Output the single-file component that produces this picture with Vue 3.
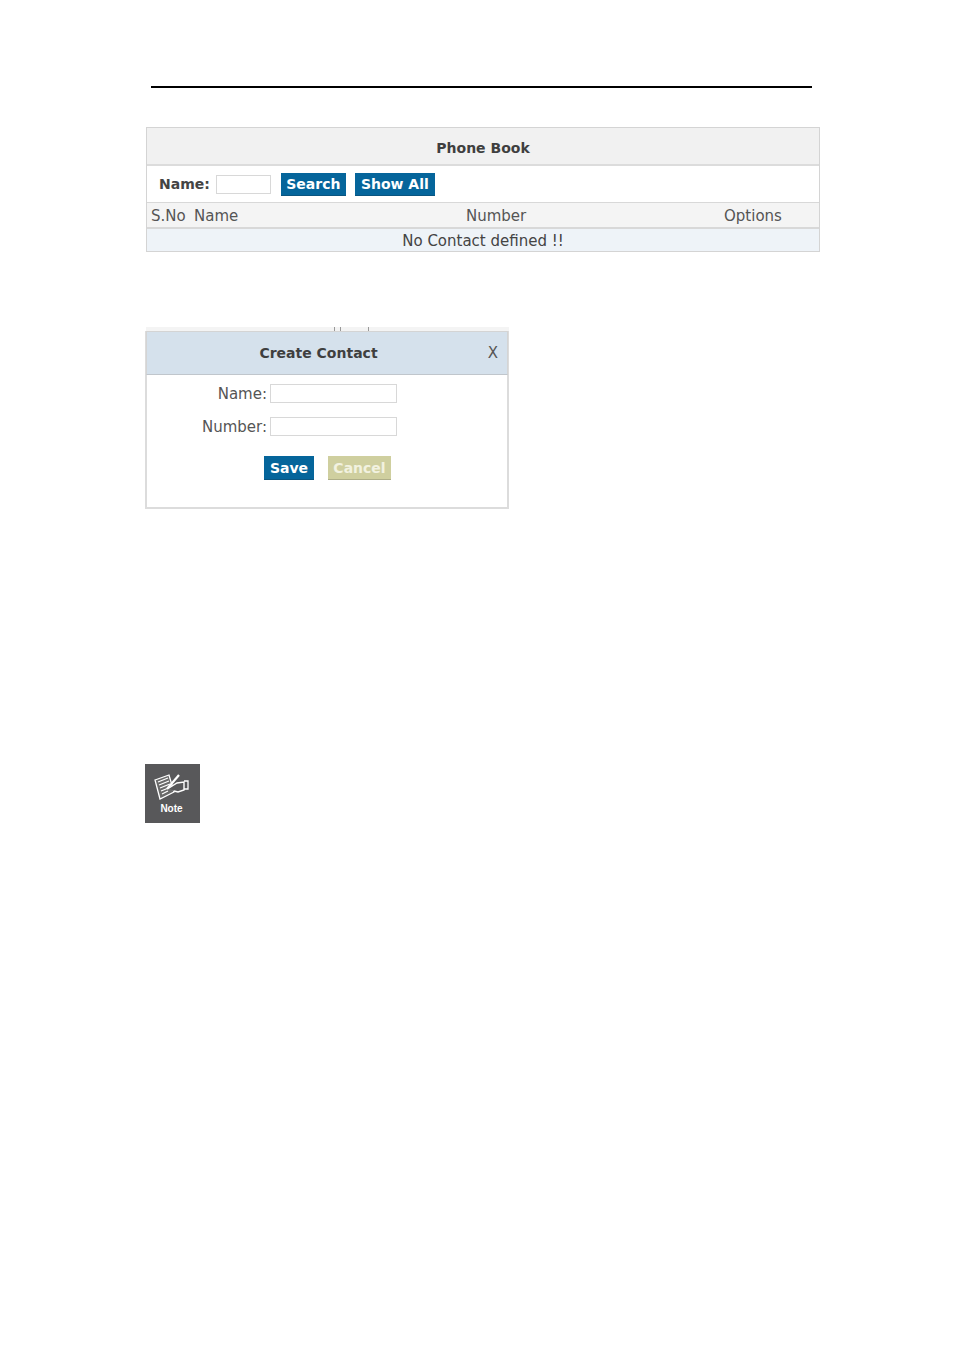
<script setup>
const columns = ['S.No', 'Name', 'Number', 'Options']
</script>

<template>
  <div class="page">
    <div class="rule"></div>

    <section class="book">
      <h2 class="book-title">Phone Book</h2>
      <div class="search-row">
        <label class="search-label">Name:</label>
        <input class="search-input" type="text" />
        <button class="btn search">Search</button>
        <button class="btn show-all">Show All</button>
      </div>
      <div class="head-row">
        <span v-for="col in columns" :key="col" :class="'col-' + col.replace('.', '').toLowerCase()">{{ col }}</span>
      </div>
      <div class="empty-row">No Contact defined !!</div>
    </section>

    <section class="dialog">
      <div class="behind"><i></i><i></i><i></i></div>
      <div class="dialog-head">
        <span class="dialog-title">Create Contact</span>
        <span class="dialog-close">X</span>
      </div>
      <div class="dialog-body">
        <div class="field">
          <label>Name:</label>
          <input type="text" />
        </div>
        <div class="field">
          <label>Number:</label>
          <input type="text" />
        </div>
        <div class="actions">
          <button class="btn save">Save</button>
          <button class="btn cancel">Cancel</button>
        </div>
      </div>
    </section>

    <div class="note">
      <svg class="note-icon" width="36" height="28" viewBox="0 0 36 28">
        <g fill="none" stroke="#fff">
          <path d="M1 6 L15 1 L20 18 L6 25 Z" stroke-width="1.3" fill="#6a6a6a" />
          <path d="M4 8 L14 4 M5 11 L15 7 M6 14 L16 10 M7 17 L17 13 M8 20 L14 17" stroke-width="1.2" />
          <path d="M13 15 L25 1" stroke-width="2.2" />
          <path d="M15 14 L23 9 L30 8 L30 16 L24 18 L20 17" stroke-width="1.4" fill="#58585a" />
          <path d="M30 7 L34 7 L34 15 L30 15" stroke-width="1.3" />
        </g>
      </svg>
      <span class="note-text">Note</span>
    </div>
  </div>
</template>

<style scoped>
.page {
  width: 954px;
  height: 1350px;
  box-sizing: border-box;
  padding-top: 86px;
  font-family: "DejaVu Sans", Verdana, sans-serif;
  font-size: 15px;
  color: #444;
  overflow: hidden;
}
.rule {
  width: 661px;
  height: 2px;
  margin-left: 151px;
  background: #000;
}

.book {
  width: 674px;
  box-sizing: border-box;
  margin: 39px 0 0 146px;
  border: 1px solid #d4d4d4;
}
.book-title {
  margin: 0;
  height: 36px;
  line-height: 40px;
  text-align: center;
  font-size: 14px;
  font-weight: bold;
  color: #3f3f3f;
  background: #f1f1f1;
  border-bottom: 2px solid #dcdcdc;
}
.search-row {
  display: flex;
  align-items: center;
  height: 36px;
  padding-left: 12px;
  background: #fff;
  border-bottom: 1px solid #d8d8d8;
}
.search-label {
  font-size: 14px;
  font-weight: bold;
  color: #444;
  margin-right: 6px;
}
.search-input {
  width: 55px;
  height: 19px;
  box-sizing: border-box;
  border: 1px solid #d8d8d8;
  padding: 0;
  margin-right: 10px;
}
.btn {
  height: 23px;
  padding: 0;
  border: 0;
  font-family: inherit;
  font-size: 14px;
  font-weight: bold;
  color: #fff;
  white-space: nowrap;
}
.search, .show-all, .save {
  background: #05659b;
  border-bottom: 1px solid #0a5580;
}
.search { width: 65px; margin-right: 9px; }
.show-all { width: 80px; }
.head-row {
  display: flex;
  height: 26px;
  line-height: 26px;
  background: #f4f4f4;
  border-bottom: 2px solid #d8d8d8;
  box-sizing: border-box;
  color: #555;
}
.col-sno { margin-left: 4px; width: 43px; }
.col-name { width: 272px; }
.col-number { width: 258px; }
.empty-row {
  height: 22px;
  line-height: 24px;
  text-align: center;
  background: #eef3f8;
  color: #444;
}

.dialog {
  position: relative;
  width: 364px;
  box-sizing: border-box;
  margin: 79px 0 0 145px;
  border: 2px solid #dcdcdc;
  border-top: 0;
}
.behind {
  position: absolute;
  top: -4px;
  left: -1px;
  right: -2px;
  height: 4px;
  background: #f4f4f4;
}
.behind i {
  position: absolute;
  top: 0;
  width: 1px;
  height: 4px;
  background: #999;
}
.behind i:nth-child(1) { left: 188px; }
.behind i:nth-child(2) { left: 194px; }
.behind i:nth-child(3) { left: 222px; }
.dialog-head {
  position: relative;
  height: 44px;
  line-height: 42px;
  margin: 0 -1px;
  text-align: center;
  background: #d5e1ec;
  border: 1px solid #d4d4d4;
  border-bottom-color: #c0c6cc;
  box-sizing: border-box;
}
.dialog-title {
  display: block;
  padding-right: 17px;
  font-size: 14px;
  font-weight: bold;
  color: #3f3f3f;
}
.dialog-close {
  position: absolute;
  top: 0;
  right: 9px;
  color: #555;
}
.dialog-body {
  height: 132px;
  box-sizing: border-box;
  padding-top: 9px;
  background: #fff;
}
.field {
  display: flex;
  align-items: center;
  height: 19px;
  margin-bottom: 14px;
}
.field label {
  width: 120px;
  text-align: right;
  margin-right: 3px;
  color: #555;
}
.field input {
  width: 127px;
  height: 19px;
  box-sizing: border-box;
  border: 1px solid #d8d8d8;
  padding: 0;
}
.actions {
  display: flex;
  padding: 6px 0 0 117px;
}
.save { width: 50px; height: 24px; margin-right: 14px; }
.cancel {
  width: 63px;
  height: 24px;
  background: #cfcf9f;
  border-bottom: 1px solid #aeae88;
  color: #f2f2e0;
}

.note {
  display: flex;
  flex-direction: column;
  align-items: center;
  width: 55px;
  height: 59px;
  margin: 255px 0 0 145px;
  background: #58585a;
  box-sizing: border-box;
  padding: 10px 2px 0 0;
}
.note-icon { display: block; }
.note-text {
  margin-top: 1px;
  font-family: "Liberation Sans", Arial, sans-serif;
  font-size: 10px;
  font-weight: bold;
  color: #fff;
}
</style>
